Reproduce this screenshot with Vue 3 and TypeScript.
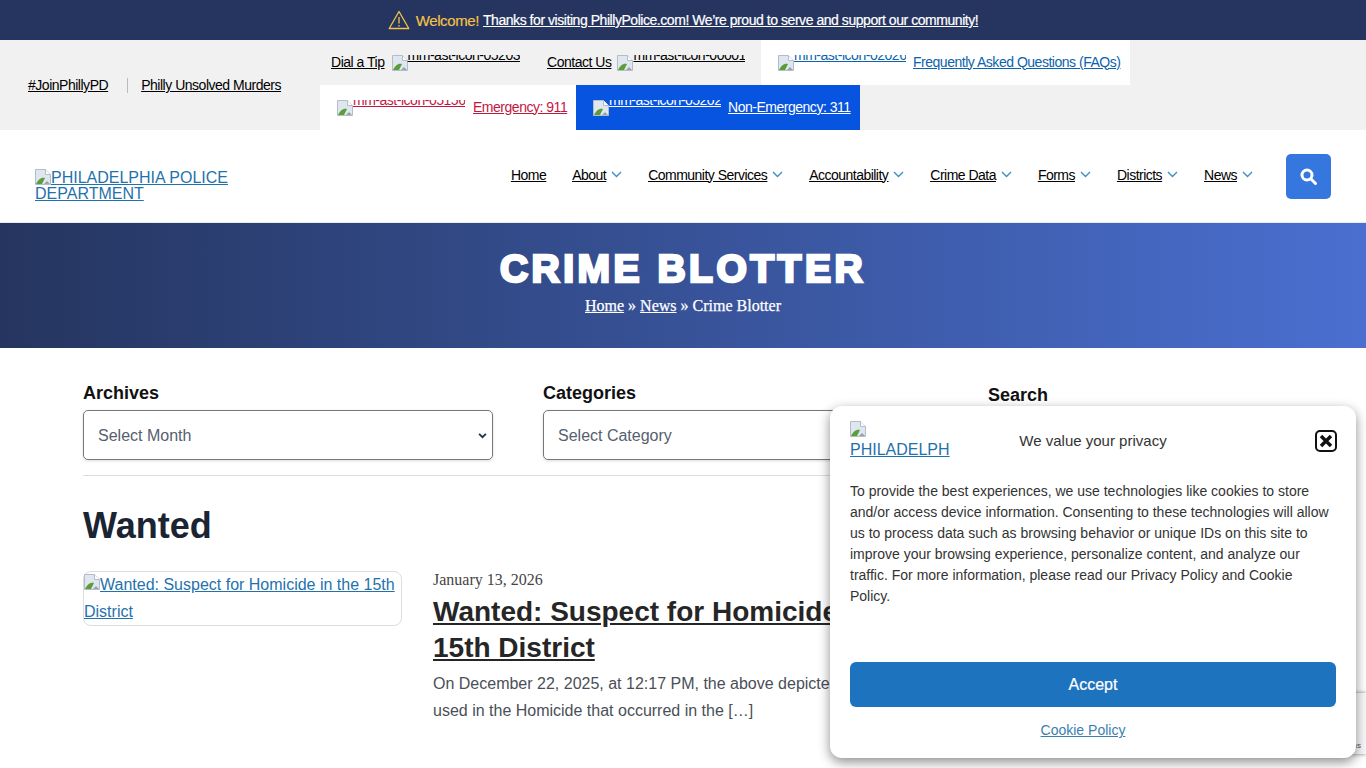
<script setup lang="ts">
const navItems = [
  { label: "Home", caret: false },
  { label: "About", caret: true },
  { label: "Community Services", caret: true },
  { label: "Accountability", caret: true },
  { label: "Crime Data", caret: true },
  { label: "Forms", caret: true },
  { label: "Districts", caret: true },
  { label: "News", caret: true },
];
</script>

<template>
  <div class="page">
    <div class="alert">
      <svg class="alert-icon" width="22" height="20" viewBox="0 0 22 20" fill="none" stroke="#f6c445" stroke-width="1.3">
        <path d="M11 1.5 1.2 18.5h19.6z" stroke-linejoin="round" />
        <path d="M11 7v6.5M11 15v1.6" />
      </svg>
      <span class="alert-welcome">Welcome!</span>
      <a class="alert-link" href="#">Thanks for visiting PhillyPolice.com! We’re proud to serve and support our community!</a>
    </div>

    <div class="topbar">
      <div class="top-left">
        <a href="#" class="top-link">#JoinPhillyPD</a>
        <span class="top-sep" />
        <a href="#" class="top-link">Philly Unsolved Murders</a>
      </div>
      <div class="top-actions">
        <a href="#" class="act act-grey act-tip">
          <span>Dial a Tip</span>
          <span class="broken"><svg class="bi" width="16" height="16" viewBox="0 0 16 16"><path d="M.5.5h10l5 5v10H.5z" fill="#dfe6ef" stroke="#b4bcc8" /><path d="M1 15c2-4 5-7 9-6l-3 6z" fill="#5a9e3a" /><path d="M9 15l3-3 3 3z" fill="#9aa3ad" /><path d="M10.5.5v5h5" fill="#fff" stroke="#b4bcc8" /></svg>mm-ast-icon-05203</span>
        </a>
        <a href="#" class="act act-grey act-contact">
          <span>Contact Us</span>
          <span class="broken"><svg class="bi" width="16" height="16" viewBox="0 0 16 16"><path d="M.5.5h10l5 5v10H.5z" fill="#dfe6ef" stroke="#b4bcc8" /><path d="M1 15c2-4 5-7 9-6l-3 6z" fill="#5a9e3a" /><path d="M9 15l3-3 3 3z" fill="#9aa3ad" /><path d="M10.5.5v5h5" fill="#fff" stroke="#b4bcc8" /></svg>mm-ast-icon-00001</span>
        </a>
        <a href="#" class="act act-white">
          <span class="broken"><svg class="bi" width="16" height="16" viewBox="0 0 16 16"><path d="M.5.5h10l5 5v10H.5z" fill="#dfe6ef" stroke="#b4bcc8" /><path d="M1 15c2-4 5-7 9-6l-3 6z" fill="#5a9e3a" /><path d="M9 15l3-3 3 3z" fill="#9aa3ad" /><path d="M10.5.5v5h5" fill="#fff" stroke="#b4bcc8" /></svg>mm-ast-icon-02026</span>
          <span>Frequently Asked Questions (FAQs)</span>
        </a>
        <a href="#" class="act act-emergency">
          <span class="broken"><svg class="bi" width="16" height="16" viewBox="0 0 16 16"><path d="M.5.5h10l5 5v10H.5z" fill="#dfe6ef" stroke="#b4bcc8" /><path d="M1 15c2-4 5-7 9-6l-3 6z" fill="#5a9e3a" /><path d="M9 15l3-3 3 3z" fill="#9aa3ad" /><path d="M10.5.5v5h5" fill="#fff" stroke="#b4bcc8" /></svg>mm-ast-icon-05156</span>
          <span>Emergency: 911</span>
        </a>
        <a href="#" class="act act-blue">
          <span class="broken"><svg class="bi" width="16" height="16" viewBox="0 0 16 16"><path d="M.5.5h10l5 5v10H.5z" fill="#dfe6ef" stroke="#b4bcc8" /><path d="M1 15c2-4 5-7 9-6l-3 6z" fill="#5a9e3a" /><path d="M9 15l3-3 3 3z" fill="#9aa3ad" /><path d="M10.5.5v5h5" fill="#fff" stroke="#b4bcc8" /></svg>mm-ast-icon-05202</span>
          <span>Non-Emergency: 311</span>
        </a>
      </div>
    </div>

    <header class="header">
      <a href="#" class="logo"><svg class="bi-inline" width="16" height="16" viewBox="0 0 16 16"><path d="M.5.5h10l5 5v10H.5z" fill="#dfe6ef" stroke="#b4bcc8" /><path d="M1 15c2-4 5-7 9-6l-3 6z" fill="#5a9e3a" /><path d="M9 15l3-3 3 3z" fill="#9aa3ad" /><path d="M10.5.5v5h5" fill="#fff" stroke="#b4bcc8" /></svg>PHILADELPHIA POLICE DEPARTMENT</a>
      <nav class="nav">
        <a v-for="item in navItems" :key="item.label" href="#" class="nav-item">
          <span class="nav-label">{{ item.label }}</span>
          <svg v-if="item.caret" width="11" height="7" viewBox="0 0 11 7" fill="none" stroke="#3f8fc4" stroke-width="1.4"><path d="M1 1l4.5 4.5L10 1" /></svg>
        </a>
      </nav>
      <button class="search-btn" aria-label="Search">
        <svg width="17" height="17" viewBox="0 0 17 17" fill="none" stroke="#fff" stroke-width="3"><circle cx="7" cy="7" r="5" /><path d="M10.8 10.8 15.5 15.5" stroke-linecap="round" /></svg>
      </button>
    </header>

    <section class="hero">
      <h1>CRIME BLOTTER</h1>
      <div class="crumbs"><a href="#">Home</a> » <a href="#">News</a> » <span>Crime Blotter</span></div>
    </section>

    <main class="main">
      <div class="filters">
        <div class="filter">
          <label>Archives</label>
          <div class="select">Select Month<svg width="9" height="6" viewBox="0 0 10 7" fill="none" stroke="#2a3550" stroke-width="2.2"><path d="M1 1l4 4 4-4" /></svg></div>
        </div>
        <div class="filter">
          <label>Categories</label>
          <div class="select">Select Category<svg width="9" height="6" viewBox="0 0 10 7" fill="none" stroke="#2a3550" stroke-width="2.2"><path d="M1 1l4 4 4-4" /></svg></div>
        </div>
        <div class="filter filter-search">
          <label>Search</label>
        </div>
      </div>
      <hr class="rule" />
      <h2 class="section-title">Wanted</h2>
      <article class="post">
        <a href="#" class="thumb"><span class="thumb-text"><svg width="16" height="16" viewBox="0 0 16 16"><path d="M.5.5h10l5 5v10H.5z" fill="#dfe6ef" stroke="#b4bcc8" /><path d="M1 15c2-4 5-7 9-6l-3 6z" fill="#5a9e3a" /><path d="M9 15l3-3 3 3z" fill="#9aa3ad" /><path d="M10.5.5v5h5" fill="#fff" stroke="#b4bcc8" /></svg>Wanted: Suspect for Homicide in the 15th District</span></a>
        <div class="post-body">
          <div class="post-date">January 13, 2026</div>
          <h3 class="post-title"><a href="#">Wanted: Suspect for Homicide in the 15th District</a></h3>
          <p class="post-text">On December 22, 2025, at 12:17 PM, the above depicted vehicle was used in the Homicide that occurred in the […]</p>
        </div>
      </article>
    </main>

    <div class="recaptcha">Terms</div>

    <aside class="cookie">
      <div class="cookie-head">
        <a href="#" class="cookie-logo"><svg width="16" height="16" viewBox="0 0 16 16"><path d="M.5.5h10l5 5v10H.5z" fill="#dfe6ef" stroke="#b4bcc8" /><path d="M1 15c2-4 5-7 9-6l-3 6z" fill="#5a9e3a" /><path d="M9 15l3-3 3 3z" fill="#9aa3ad" /><path d="M10.5.5v5h5" fill="#fff" stroke="#b4bcc8" /></svg>PHILADELPH</a>
        <div class="cookie-title">We value your privacy</div>
        <button class="cookie-close" aria-label="Close">
          <svg width="22" height="22" viewBox="0 0 22 22" fill="none"><rect x="1" y="1" width="20" height="20" rx="4" stroke="#111" stroke-width="2" /><path d="M6 6l10 10M16 6 6 16" stroke="#111" stroke-width="3.4" /></svg>
        </button>
      </div>
      <p class="cookie-text">To provide the best experiences, we use technologies like cookies to store and/or access device information. Consenting to these technologies will allow us to process data such as browsing behavior or unique IDs on this site to improve your browsing experience, personalize content, and analyze our traffic. For more information, please read our Privacy Policy and Cookie Policy.</p>
      <button class="accept">Accept</button>
      <a href="#" class="cookie-policy">Cookie Policy</a>
    </aside>
  </div>
</template>

<style scoped>
.page {
  width: 1366px;
  height: 768px;
  overflow: hidden;
  position: relative;
  font-family: "Liberation Sans", Arial, sans-serif;
  color: #1a2433;
}

.alert {
  height: 40px;
  background: #25355f;
  display: flex;
  align-items: center;
  justify-content: center;
  font-size: 14px;
  letter-spacing: -0.45px;
}
.alert-icon {
  margin-right: 6px;
}
.alert-welcome {
  color: #f6c445;
  font-size: 15px;
  letter-spacing: -0.4px;
  margin-right: 4px;
  -webkit-text-stroke: 0.15px #f6c445;
}
.alert-link {
  color: #fff;
  text-decoration: underline;
  -webkit-text-stroke: 0.2px #fff;
}

.topbar {
  height: 90px;
  background: #f1f1f1;
  display: flex;
}
.top-left {
  width: 320px;
  box-sizing: border-box;
  padding-left: 28px;
  display: flex;
  align-items: center;
  font-size: 14px;
  letter-spacing: -0.48px;
}
.top-link {
  color: #000;
  text-decoration: underline;
}
.top-sep {
  width: 1px;
  height: 15px;
  background: #bbb;
  margin: 0 13px 0 19px;
}
.top-actions {
  width: 811px;
  display: flex;
  flex-wrap: wrap;
  align-content: flex-start;
  font-size: 14px;
  letter-spacing: -0.48px;
}
.act {
  height: 45px;
  padding-bottom: 2px;
  display: flex;
  align-items: center;
  gap: 7px;
  text-decoration: underline;
  box-sizing: border-box;
  white-space: nowrap;
}
.act-grey {
  color: #000;
}
.act-tip {
  padding-left: 11px;
  width: 227px;
}
.act-contact {
  width: 214px;
  gap: 6px;
}
.act-white {
  width: 369px;
  margin-right: 1px;
  background: #fff;
  color: #0b63ad;
  padding-left: 17px;
}
.act-emergency {
  width: 256px;
  background: #fff;
  color: #c4173f;
  padding-left: 17px;
  gap: 8px;
}
.act-blue {
  width: 284px;
  background: #0654e0;
  color: #fff;
  padding-left: 17px;
}
.broken {
  display: inline-block;
  width: 128px;
  height: 16px;
  overflow: hidden;
  white-space: nowrap;
  line-height: 0;
  margin-top: 2px;
  flex: none;
}
.bi {
  vertical-align: top;
}

.header {
  height: 92px;
  border-bottom: 1px solid #e6ecf2;
  background: #fff;
  display: flex;
  align-items: center;
  box-sizing: content-box;
}
.logo {
  width: 260px;
  margin-left: 35px;
  color: #1f72ac;
  font-size: 16px;
  line-height: 16px;
  text-decoration: underline;
  flex: none;
  margin-top: 18px;
}
.bi-inline {
  vertical-align: -2px;
}
.nav {
  margin-left: auto;
  display: flex;
  align-items: center;
  gap: 26px;
  margin-top: -3px;
  letter-spacing: -0.52px;
}
.nav-item {
  display: flex;
  align-items: center;
  gap: 5px;
  font-size: 14px;
  color: #000;
}
.nav-label {
  text-decoration: underline;
}
.search-btn {
  width: 45px;
  height: 45px;
  margin: 0 35px 0 33px;
  border: 0;
  border-radius: 5px;
  background: #3577de;
  display: flex;
  align-items: center;
  justify-content: center;
}

.hero {
  height: 125px;
  background: linear-gradient(90deg, #25355f, #4a6fd0);
  color: #fff;
  text-align: center;
  box-sizing: border-box;
  padding-top: 23px;
}
.hero h1 {
  margin: 0;
  font-size: 39px;
  line-height: 46px;
  font-weight: 700;
  letter-spacing: 3.5px;
  -webkit-text-stroke: 2.6px #fff;
}
.crumbs {
  font-family: "Liberation Serif", serif;
  font-size: 16px;
  line-height: 20px;
  margin-top: 4px;
  -webkit-text-stroke: 0.25px #fff;
}
.crumbs a {
  color: #fff;
  text-decoration: underline;
}

.main {
  padding: 0 83px;
}
.filters {
  display: flex;
  padding-top: 35px;
}
.filter {
  width: 410px;
  flex: none;
  margin-right: 50px;
}
.filter label {
  display: block;
  font-size: 18px;
  font-weight: 700;
  line-height: 21px;
  color: #111;
  margin-bottom: 6px;
}
.select {
  height: 50px;
  box-sizing: border-box;
  border: 1px solid #777;
  border-radius: 5px;
  padding: 1px 5px 0 14px;
  font-size: 16px;
  color: #556070;
  display: flex;
  align-items: center;
  justify-content: space-between;
  box-shadow: 0 1px 3px rgba(0, 0, 0, 0.15);
}
.filter-search {
  margin-left: -15px;
  padding-top: 2px;
}
.rule {
  margin: 15px 0 0;
  width: 1200px;
  border: 0;
  border-top: 1px solid #ddd;
}
.section-title {
  margin: 30px 0 0;
  font-size: 36px;
  line-height: 40px;
  font-weight: 700;
  color: #1a2433;
}
.post {
  margin-top: 25px;
  display: flex;
  gap: 31px;
  width: 1200px;
}
.thumb {
  width: 319px;
  height: 55px;
  flex: none;
  box-sizing: border-box;
  border: 1px solid #ddd;
  border-radius: 8px;
  font-size: 16px;
  line-height: 27px;
  color: #1f72ac;
  text-decoration: underline;
}
.thumb-text {
  display: block;
  margin-top: -1px;
}
.post-body {
  width: 525px;
}
.post-date {
  font-family: "Liberation Serif", serif;
  font-size: 16px;
  line-height: 18px;
  color: #444;
}
.post-title {
  margin: 5px 0 0;
  font-size: 28px;
  line-height: 36px;
  font-weight: 700;
}
.post-title a {
  color: #262626;
  text-decoration: underline;
}
.post-text {
  margin: 4px 0 0;
  font-size: 16px;
  line-height: 27px;
  color: #4a4f57;
}

.recaptcha {
  position: absolute;
  left: 1296px;
  top: 693px;
  width: 70px;
  height: 61px;
  box-sizing: border-box;
  padding: 48px 5px 0 0;
  text-align: right;
  font-size: 8px;
  line-height: 10px;
  color: #555;
  background: #f8f8f8;
  box-shadow: 0 0 4px #888;
}

.cookie {
  position: absolute;
  left: 830px;
  top: 406px;
  width: 526px;
  height: 352px;
  box-sizing: border-box;
  padding: 20px;
  background: #fff;
  border-radius: 12px;
  box-shadow: 0 4px 12px rgba(0, 0, 0, 0.45);
  font-size: 14px;
  color: #333;
  display: flex;
  flex-direction: column;
}
.cookie-head {
  display: grid;
  grid-template-columns: 1fr auto 1fr;
  align-items: center;
  height: 34px;
  margin-top: -3px;
}
.cookie-logo {
  width: 100px;
  margin-top: -1px;
  font-size: 16px;
  line-height: 16px;
  color: #1f72ac;
  text-decoration: underline;
  overflow: hidden;
  white-space: nowrap;
}
.cookie-logo svg {
  display: block;
  margin-bottom: 5px;
}
.cookie-title {
  text-align: center;
  font-size: 15px;
}
.cookie-close {
  justify-self: end;
  width: 22px;
  height: 22px;
  padding: 0;
  border: 0;
  background: none;
  margin: 1px -1px 0 0;
}
.cookie-text {
  margin: 24px 0 0;
  line-height: 21px;
}
.accept {
  margin-top: 55px;
  height: 45px;
  border: 0;
  border-radius: 6px;
  background: #1e73be;
  color: #fff;
  font-family: inherit;
  font-size: 16px;
  font-weight: 400;
  -webkit-text-stroke: 0.2px #fff;
}
.cookie-policy {
  margin-top: 15px;
  align-self: center;
  margin-right: 20px;
  color: #3b7fb0;
  text-decoration: underline;
}
</style>
